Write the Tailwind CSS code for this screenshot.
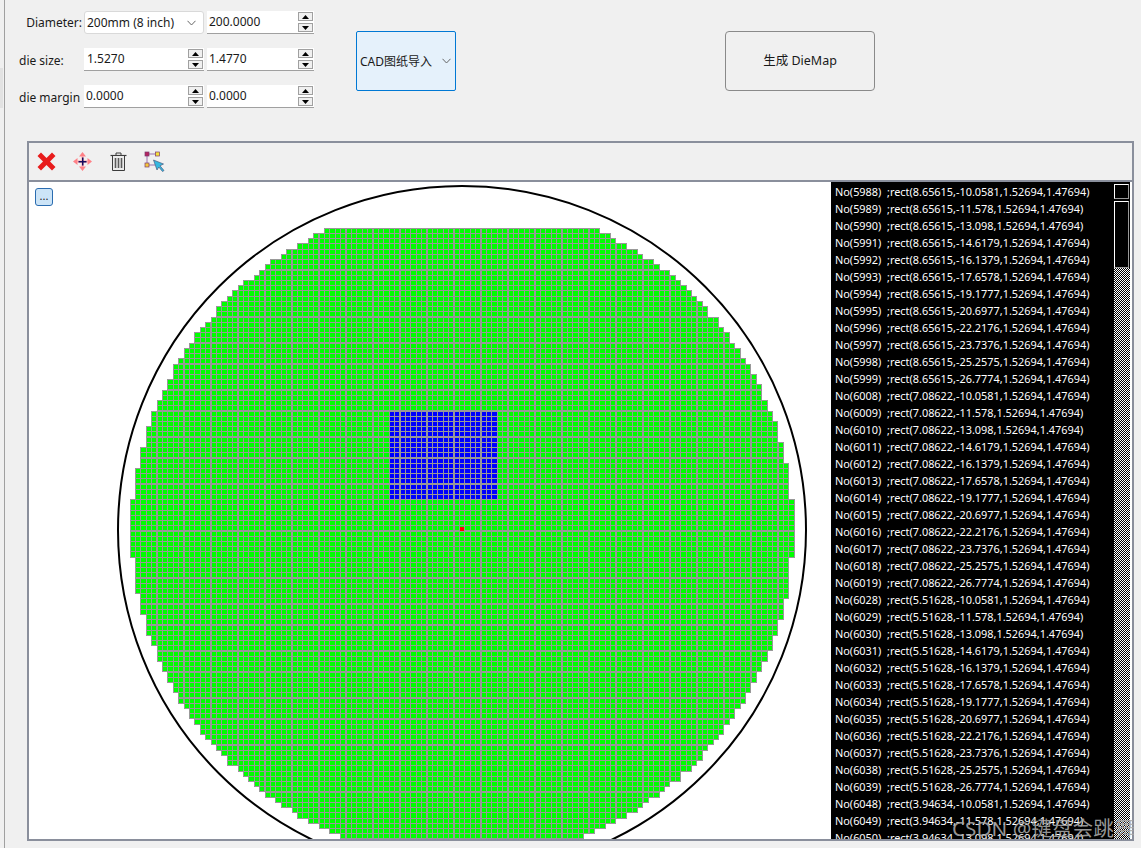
<!DOCTYPE html>
<html lang="en">
<head>
  <meta charset="UTF-8" />
  <title>DieMap</title>
  <script src="https://cdn.jsdelivr.net/npm/@tailwindcss/browser@4"></script>
</head>
<body class="w-[1141px] h-[848px] overflow-hidden bg-[#f0f0f0] font-['Segoe_UI','Noto_Sans','Noto_Sans_CJK_SC',sans-serif] text-[12px] text-[#1a1a1a]">
  <div class="relative h-[848px] pl-[4px]">
    <div class="h-[848px] border-l border-[#a0a0a0] pl-[22px]">
      <!-- top form -->
      <div class="flex h-[141px] -ml-[13px]">
        <div class="w-[300px] pt-[11px] flex flex-col gap-[14px]">
          <div class="flex h-[23px] items-center">
            <span class="w-[70px] text-right pr-[2px] pt-[1px]">Diameter:</span>
            <div class="w-[120px] h-[23px] bg-white border border-[#d9d9d9] rounded-[3px] flex items-center pl-[2px] pr-[7px] justify-between">
              <span class="pt-[1px]">200mm (8 inch)</span>
              <svg width="9" height="6" viewBox="0 0 9 6"><path d="M.5 .8 4.500 5 8.500 .8" fill="none" stroke="#666"/></svg>
            </div>
            <div class="ml-[3px] w-[107px] h-[23px] bg-white border-b border-[#a0a0a0] flex items-center justify-between pl-[2px] pr-[1px]">
              <span class="-mt-[1px]">200.0000</span>
              <div class="flex flex-col gap-[2px]">
                <div class="w-[15px] h-[9px] border border-[#a0a0a0] bg-[#f0f0f0] flex items-center justify-center"><svg width="7" height="4"><path d="M3.500 0 7 4H0z"/></svg></div>
                <div class="w-[15px] h-[9px] border border-[#a0a0a0] bg-[#f0f0f0] flex items-center justify-center"><svg width="7" height="4"><path d="M0 0h7L3.500 4z"/></svg></div>
              </div>
            </div>
          </div>
          <div class="flex h-[23px] items-center">
            <span class="w-[70px] pl-[5px] pt-[2px]">die size:</span>
            <div class="w-[120px] h-[23px] bg-white border-b border-[#a0a0a0] flex items-center justify-between pl-[3px] pr-[1px]">
              <span class="-mt-[1px]">1.5270</span>
              <div class="flex flex-col gap-[2px]">
                <div class="w-[15px] h-[9px] border border-[#a0a0a0] bg-[#f0f0f0] flex items-center justify-center"><svg width="7" height="4"><path d="M3.500 0 7 4H0z"/></svg></div>
                <div class="w-[15px] h-[9px] border border-[#a0a0a0] bg-[#f0f0f0] flex items-center justify-center"><svg width="7" height="4"><path d="M0 0h7L3.500 4z"/></svg></div>
              </div>
            </div>
            <div class="ml-[3px] w-[107px] h-[23px] bg-white border-b border-[#a0a0a0] flex items-center justify-between pl-[2px] pr-[1px]">
              <span class="-mt-[1px]">1.4770</span>
              <div class="flex flex-col gap-[2px]">
                <div class="w-[15px] h-[9px] border border-[#a0a0a0] bg-[#f0f0f0] flex items-center justify-center"><svg width="7" height="4"><path d="M3.500 0 7 4H0z"/></svg></div>
                <div class="w-[15px] h-[9px] border border-[#a0a0a0] bg-[#f0f0f0] flex items-center justify-center"><svg width="7" height="4"><path d="M0 0h7L3.500 4z"/></svg></div>
              </div>
            </div>
          </div>
          <div class="flex h-[23px] items-center">
            <span class="w-[70px] pl-[5px] pt-[2px] whitespace-nowrap">die margin</span>
            <div class="w-[120px] h-[23px] bg-white border-b border-[#a0a0a0] flex items-center justify-between pl-[2px] pr-[1px]">
              <span class="-mt-[1px]">0.0000</span>
              <div class="flex flex-col gap-[2px]">
                <div class="w-[15px] h-[9px] border border-[#a0a0a0] bg-[#f0f0f0] flex items-center justify-center"><svg width="7" height="4"><path d="M3.500 0 7 4H0z"/></svg></div>
                <div class="w-[15px] h-[9px] border border-[#a0a0a0] bg-[#f0f0f0] flex items-center justify-center"><svg width="7" height="4"><path d="M0 0h7L3.500 4z"/></svg></div>
              </div>
            </div>
            <div class="ml-[3px] w-[107px] h-[23px] bg-white border-b border-[#a0a0a0] flex items-center justify-between pl-[2px] pr-[1px]">
              <span class="-mt-[1px]">0.0000</span>
              <div class="flex flex-col gap-[2px]">
                <div class="w-[15px] h-[9px] border border-[#a0a0a0] bg-[#f0f0f0] flex items-center justify-center"><svg width="7" height="4"><path d="M3.500 0 7 4H0z"/></svg></div>
                <div class="w-[15px] h-[9px] border border-[#a0a0a0] bg-[#f0f0f0] flex items-center justify-center"><svg width="7" height="4"><path d="M0 0h7L3.500 4z"/></svg></div>
              </div>
            </div>
          </div>
        </div>
        <div class="pt-[31px] pl-[42px]">
          <div class="w-[100px] h-[60px] bg-[#e5f1fb] border border-[#0078d4] rounded-[2px] flex items-center justify-between pl-[3px] pr-[4px]">
            <span class="whitespace-nowrap pt-[1px]">CAD图纸导入</span>
            <svg width="9" height="6" viewBox="0 0 9 6"><path d="M.5 .8 4.500 5 8.500 .8" fill="none" stroke="#666"/></svg>
          </div>
        </div>
        <div class="pt-[31px] pl-[269px]">
          <div class="w-[150px] h-[60px] bg-[#f0f0f0] border border-[#8a8a8a] rounded-[4px] flex items-center justify-center text-[12.5px] pt-[1px]">生成 DieMap</div>
        </div>
      </div>
      <!-- map frame -->
      <div class="w-[1107px] h-[700px] border-2 border-[#8a8f9c] flex flex-col">
        <div class="h-[39px] flex items-center border-b-2 border-[#8a8f9c] pl-[8px] shrink-0">
          <svg width="19" height="19" viewBox="0 0 19 19"><path d="M4 .5 9.500 6 15 .5 18.500 4 13 9.500 18.500 15 15 18.500 9.500 13 4 18.500 .5 15 6 9.500 .5 4z" fill="#e81c1c"/></svg>
          <svg class="ml-[17px]" width="19" height="19" viewBox="0 0 19 19"><path d="M9.500 0 13 4.500H6zM9.500 19 6 14.500h7zM0 9.500 4.500 6v7zM19 9.500 14.500 13V6z" fill="#ff8187"/><path d="M8.500 4h2v11h-2zM4 8.500h11v2H4z" fill="#ffa0a4"/><path d="M9 5.500h1.500v8H9zM5.500 9h8v1.500h-8z" fill="#14095c"/></svg>
          <svg class="ml-[18px]" width="17" height="19" viewBox="0 0 17 19" fill="none" stroke="#3c3c3c"><path d="M.5 3.500h16" stroke-width="1.200"/><path d="M6 3V1h5v2"/><path d="M2.500 4v14.500h12V4" fill="#ececec"/><path d="M5.500 6v10M8.500 6v10M11.500 6v10" stroke="#5a5a5a" stroke-width="1.600"/></svg>
          <svg class="ml-[17px]" width="22" height="21" viewBox="0 0 22 21"><path d="M3 3h10M3 3v11M3 14h8" fill="none" stroke="#b79ac4" stroke-width="1.500"/><rect x="1" y="1" width="4" height="4" fill="#b5245f" stroke="#7a3a70" stroke-width=".7"/><rect x="11.500" y="1" width="4" height="4" fill="#f6e13a" stroke="#7a3a70" stroke-width=".7"/><rect x="1" y="12" width="4" height="4" fill="#f6c93a" stroke="#7a3a70" stroke-width=".7"/><path d="M9.500 9 19.500 13 16 14.800 20 19.500 18.500 20.500 14.800 16 13 19z" fill="#35b8e0" stroke="#4a5a80" stroke-width=".7"/></svg>
        </div>
        <div class="relative flex flex-1 min-h-0 bg-white overflow-hidden">
          <div class="relative w-[802px] h-full overflow-hidden">
            <div class="absolute left-[6px] top-[6px] w-[18px] h-[18px] bg-[#cce4f7] border border-[#2a6cb0] rounded-[3px] text-[11px] leading-[14px] text-center">...</div>
            <svg id="wafer" class="block" width="802" height="658" viewBox="29 182 802 658" shape-rendering="crispEdges"></svg>
          </div>
          <div id="list" class="w-[282px] h-full bg-black text-white text-[10.9px] pl-[4px] pt-[1px] overflow-hidden whitespace-pre leading-[17px]"></div>
          <div class="w-[17px] h-full bg-black flex flex-col pl-[1px] pt-[2px]">
            <div class="w-[15px] h-[15px] border border-white border-b-[#999] border-r-[#999]"></div>
            <div class="mt-[2px] w-[15px] h-[67px] border border-white border-b-[#999] border-r-[#999]"></div>
            <div class="flex-1 w-[16px] bg-[repeating-conic-gradient(#000_0_25%,#fff_0_50%)] bg-[length:2px_2px]"></div>
          </div>
        </div>
      </div>
    </div>
    <div class="absolute left-0 top-[68px] w-[3px] h-[40px] bg-[#e2e2e2]"></div>
    <div class="absolute left-[952px] top-[814px] text-[20.7px] leading-[28px] whitespace-nowrap text-[#a8a8a8]/90 font-['Noto_Sans','Noto_Sans_CJK_SC',sans-serif]">CSDN @键盘会跳舞</div>
  </div>
  <script>
    // list rows
    const ys = ["-10.0581","-11.578","-13.098","-14.6179","-16.1379","-17.6578","-19.1777","-20.6977","-22.2176","-23.7376","-25.2575","-26.7774"];
    const cols = [[5988,"8.65615"],[6008,"7.08622"],[6028,"5.51628"],[6048,"3.94634"]];
    const lines = [];
    cols.forEach(([n, x]) => ys.forEach((y, i) => lines.push(`No(${n + i})  ;rect(${x},${y},1.52694,1.47694)`)));
    document.getElementById("list").textContent = lines.slice(0, 39).join("\n");

    // die map: pitch 5.4 x 5.22 px, outlines rounded to whole pixels
    const cx = 462, cy = 529, px = 5.4, py = 5.22, w = 5.2, h = 5.05, x0 = 129.6, y0 = 227.82;
    let gray = "", green = "", blue = "";
    for (let j = 0; j < 125; j++) {
      for (let i = 0; i < 123; i++) {
        const l = Math.round(x0 + i * px), r = Math.round(x0 + i * px + w);
        const t = Math.round(y0 + j * py), b = Math.round(y0 + j * py + h);
        const dx = Math.max(Math.abs(l - cx), Math.abs(r - cx));
        const dy = Math.max(Math.abs(t - cy), Math.abs(b - cy));
        const ry = t < cy ? 331 : 333;
        if ((dx / 333.5) ** 2 + (dy / ry) ** 2 > 1) continue;
        gray += `M${l} ${t}H${r + 1}V${b + 1}H${l}z`;
        const d = `M${l + 1} ${t + 1}H${r}V${b}H${l + 1}z`;
        if (i >= 48 && i < 68 && j >= 35 && j < 52) blue += d; else green += d;
      }
    }
    document.getElementById("wafer").innerHTML =
      `<circle cx="462" cy="530" r="344" fill="none" stroke="#000" stroke-width="2" shape-rendering="auto"/>` +
      `<path d="${gray}" fill="#999"/><path d="${green}" fill="#0f0"/><path d="${blue}" fill="#00f"/>` +
      `<rect x="460" y="527" width="4" height="4" fill="#f00"/>`;
  </script>
</body>
</html>
